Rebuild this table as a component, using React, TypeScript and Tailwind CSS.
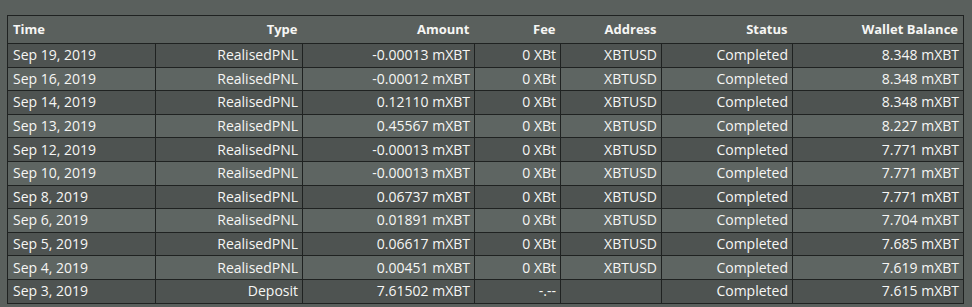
import React from "react";

const rows: string[][] = [
  ["Sep 19, 2019", "RealisedPNL", "-0.00013 mXBT", "0 XBt", "XBTUSD", "Completed", "8.348 mXBT"],
  ["Sep 16, 2019", "RealisedPNL", "-0.00012 mXBT", "0 XBt", "XBTUSD", "Completed", "8.348 mXBT"],
  ["Sep 14, 2019", "RealisedPNL", "0.12110 mXBT", "0 XBt", "XBTUSD", "Completed", "8.348 mXBT"],
  ["Sep 13, 2019", "RealisedPNL", "0.45567 mXBT", "0 XBt", "XBTUSD", "Completed", "8.227 mXBT"],
  ["Sep 12, 2019", "RealisedPNL", "-0.00013 mXBT", "0 XBt", "XBTUSD", "Completed", "7.771 mXBT"],
  ["Sep 10, 2019", "RealisedPNL", "-0.00013 mXBT", "0 XBt", "XBTUSD", "Completed", "7.771 mXBT"],
  ["Sep 8, 2019", "RealisedPNL", "0.06737 mXBT", "0 XBt", "XBTUSD", "Completed", "7.771 mXBT"],
  ["Sep 6, 2019", "RealisedPNL", "0.01891 mXBT", "0 XBt", "XBTUSD", "Completed", "7.704 mXBT"],
  ["Sep 5, 2019", "RealisedPNL", "0.06617 mXBT", "0 XBt", "XBTUSD", "Completed", "7.685 mXBT"],
  ["Sep 4, 2019", "RealisedPNL", "0.00451 mXBT", "0 XBt", "XBTUSD", "Completed", "7.619 mXBT"],
  ["Sep 3, 2019", "Deposit", "7.61502 mXBT", "-.--", "", "Completed", "7.615 mXBT"],
];

const headers = ["Time", "Type", "Amount", "Fee", "Address", "Status", "Wallet Balance"];
const widths = ["w-[148px]", "w-[147px]", "w-[172px]", "w-[86px]", "w-[101px]", "w-[131px]", "w-[171px]"];

export default function App() {
  return (
    <div
      className="w-[972px] h-[307px] bg-[#5a605d] pt-[15px] pl-[7px] overflow-hidden text-[#f6f6f4]"
      style={{ fontFamily: '"Open Sans", "Liberation Sans", sans-serif' }}
    >
      <table className="border-collapse table-fixed w-[957px]">
        <colgroup>
          {widths.map((w, i) => (
            <col key={i} className={w} />
          ))}
        </colgroup>
        <thead>
          <tr className="h-[28px] border border-[#1f2221]">
            {headers.map((h, i) => (
              <th
                key={h}
                className={`text-[13px] font-bold px-[5px] pt-[1px] ${i === 0 ? "text-left" : "text-right"}`}
              >
                {h}
              </th>
            ))}
          </tr>
        </thead>
        <tbody>
          {rows.map((r, ri) => (
            <tr key={ri} className={`h-[23.6px] ${ri % 2 === 0 ? "bg-[#4e5351]" : "bg-[#5e6562]"}`}>
              {r.map((c, ci) => (
                <td
                  key={ci}
                  className={`border border-[#1f2221] text-[14px] font-medium leading-[18px] px-[4px] py-0 whitespace-nowrap ${
                    ci === 0 ? "text-left pl-[5px]" : "text-right"
                  }`}
                >
                  {c}
                </td>
              ))}
            </tr>
          ))}
        </tbody>
      </table>
    </div>
  );
}
